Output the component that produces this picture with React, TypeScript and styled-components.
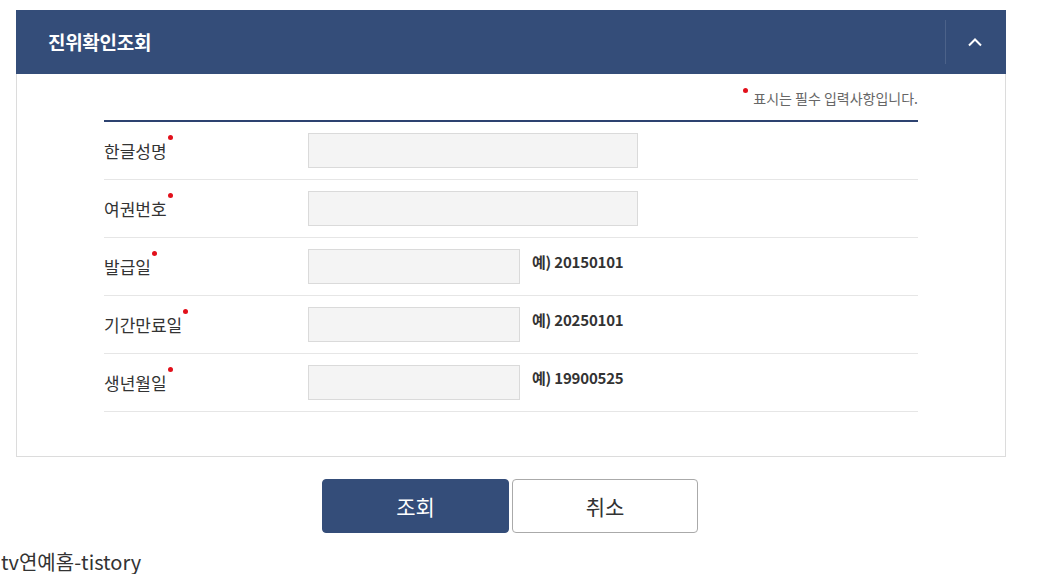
import React from "react";
import styled, { createGlobalStyle } from "styled-components";

const GlobalStyle = createGlobalStyle`
  html, body { margin: 0; padding: 0; background: #fff; }
  body {
    font-family: "Noto Sans CJK KR", "Noto Sans", sans-serif;
    color: #333;
  }
  * { box-sizing: border-box; }
`;

const Page = styled.div`
  padding-top: 10px;
`;

const Panel = styled.section`
  width: 990px;
  margin-left: 16px;
`;

const Header = styled.header`
  height: 64px;
  background: #344d79;
  display: flex;
  align-items: center;
  padding-left: 32px;
`;

const Title = styled.h2`
  flex: 1;
  margin: 0;
  font-size: 19px;
  font-weight: 700;
  color: #fff;
  letter-spacing: -0.3px;
  line-height: 24px;
`;

const Toggle = styled.button`
  width: 61px;
  height: 44px;
  border: none;
  border-left: 1px solid rgba(255, 255, 255, 0.12);
  background: transparent;
  display: flex;
  align-items: center;
  justify-content: center;
  padding: 0 2px 0 0;
  cursor: pointer;
`;

const Body = styled.div`
  border: 1px solid #dcdcdc;
  border-top: none;
  padding: 14px 87px 44px;
`;

const Note = styled.p`
  margin: 0 0 12px;
  text-align: right;
  font-size: 14px;
  line-height: 20px;
  color: #666;
  display: flex;
  justify-content: flex-end;
  align-items: flex-start;
`;

const Dot = styled.span<{ $gap?: number; $lift?: number }>`
  display: inline-block;
  width: 5px;
  height: 5px;
  border-radius: 50%;
  background: #e2101b;
  margin-left: ${(p) => p.$gap ?? 0}px;
  margin-right: ${(p) => (p.$gap === undefined ? 5 : 0)}px;
  margin-top: ${(p) => p.$lift ?? 0}px;
  flex: none;
`;

const Form = styled.div`
  border-top: 2px solid #2d4270;
`;

const Row = styled.div`
  height: 58px;
  border-bottom: 1px solid #e6e6e6;
  display: flex;
  align-items: center;
`;

const Label = styled.label`
  width: 204px;
  flex: none;
  display: inline-flex;
  align-items: flex-start;
  font-size: 17px;
  line-height: 22px;
  color: #333;
`;

const Input = styled.input<{ $short?: boolean }>`
  width: ${(p) => (p.$short ? 212 : 330)}px;
  height: 35px;
  background: #f4f4f4;
  border: 1px solid #dadada;
  outline: none;
  padding: 0 10px;
  font-family: inherit;
  font-size: 14px;
  flex: none;
`;

const Hint = styled.span`
  align-self: flex-start;
  margin-top: 13px;
  margin-left: 12px;
  font-size: 15px;
  line-height: 22px;
  font-weight: 700;
  color: #333;
  letter-spacing: -0.2px;
`;

const Buttons = styled.div`
  width: 990px;
  margin-left: 15px;
  margin-top: 22px;
  display: flex;
  justify-content: center;
  gap: 3px;
`;

const Button = styled.button<{ $primary?: boolean }>`
  width: ${(p) => (p.$primary ? 187 : 186)}px;
  height: 54px;
  border-radius: 4px;
  font-family: inherit;
  font-size: 21px;
  cursor: pointer;
  background: ${(p) => (p.$primary ? "#344d79" : "#fff")};
  color: ${(p) => (p.$primary ? "#fff" : "#333")};
  border: 1px solid ${(p) => (p.$primary ? "#344d79" : "#aaa")};
`;

const Footer = styled.div`
  margin-top: 17px;
  padding-left: 1px;
  font-size: 20px;
  line-height: 24px;
  color: #333;
`;

const fields = [
  { label: "한글성명" },
  { label: "여권번호" },
  { label: "발급일", hint: "예) 20150101" },
  { label: "기간만료일", hint: "예) 20250101" },
  { label: "생년월일", hint: "예) 19900525" },
];

export default function App() {
  return (
    <Page>
      <GlobalStyle />
      <Panel>
        <Header>
          <Title>진위확인조회</Title>
          <Toggle aria-label="접기">
            <svg width="16" height="10" viewBox="0 0 16 10" fill="none">
              <path d="M2 8.5 L8 2.5 L14 8.5" stroke="#fff" strokeWidth="2" />
            </svg>
          </Toggle>
        </Header>
        <Body>
          <Note>
            <Dot $lift={0} />
            표시는 필수 입력사항입니다.
          </Note>
          <Form>
            {fields.map((f) => (
              <Row key={f.label}>
                <Label>
                  {f.label}
                  <Dot $gap={1} $lift={-5} />
                </Label>
                <Input $short={!!f.hint} />
                {f.hint && <Hint>{f.hint}</Hint>}
              </Row>
            ))}
          </Form>
        </Body>
      </Panel>
      <Buttons>
        <Button $primary>조회</Button>
        <Button>취소</Button>
      </Buttons>
      <Footer>tv연예홈-tistory</Footer>
    </Page>
  );
}
